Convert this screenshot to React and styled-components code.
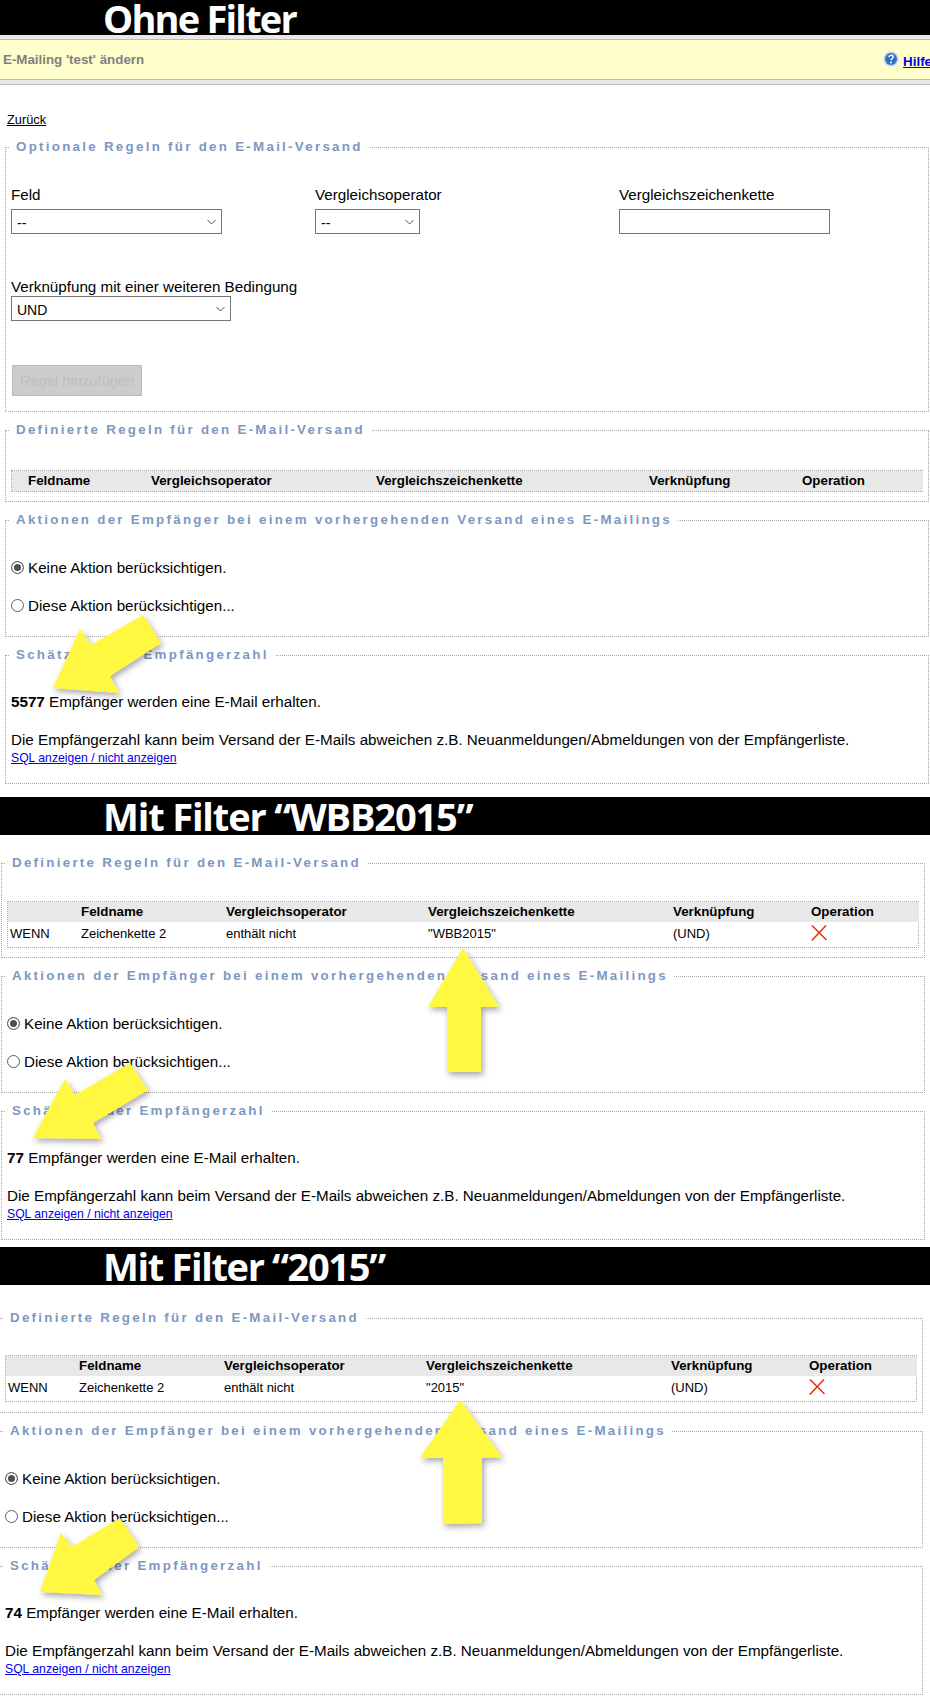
import React from "react";
import styled, { createGlobalStyle } from "styled-components";

const Global = createGlobalStyle`
  html, body { margin: 0; padding: 0; background: #fff; }
  body { font-family: "Liberation Sans", Arial, sans-serif; font-size: 15.2px; color: #000; }
`;

const Page = styled.div`
  position: relative;
  width: 930px;
  height: 1700px;
  overflow: hidden;
  background: #fff;
`;

const Banner = styled.div`
  height: ${(p) => p.$h}px;
  margin-top: ${(p) => p.$top}px;
  background: #000;
  color: #fff;
  padding-left: 103px;
  font-family: "Open Sans", sans-serif;
  font-weight: 700;
  font-size: 38px;
  letter-spacing: ${(p) => p.$ls}px;
  line-height: ${(p) => p.$lh}px;
  overflow: hidden;
  white-space: nowrap;
`;

const TitleBar = styled.div`
  display: flex;
  align-items: center;
  justify-content: space-between;
  height: 39px;
  margin-top: 4px;
  background: #ffffcc;
  border-top: 1px solid #bbb;
  border-bottom: 1px solid #bbb;
  padding-left: 3px;
  box-shadow: 0 -4px 0 #e8e8e8;
`;

const TitleText = styled.span`
  font-size: 13.33px;
  font-weight: 700;
  color: #808080;
`;

const HelpLink = styled.a`
  display: flex;
  align-items: center;
  gap: 4px;
  margin-right: -2px;
  font-size: 13.33px;
  font-weight: 700;
  color: #0000ee;
  > span { text-decoration: underline; padding-top: 3px; }
  > svg { margin-top: -2px; }
`;

const SubStrip = styled.div`
  height: 4px;
  background: #e8e8e8;
  border-bottom: 1px solid #bbb;
`;

const BackLink = styled.a`
  display: block;
  margin: 26px 0 10px 7px;
  font-size: 12.8px;
  line-height: 18px;
  color: #000;
  text-decoration: underline;
`;

const Section = styled.div`
  display: flex;
  flex-direction: column;
  gap: 10px;
  width: ${(p) => p.$w}px;
  margin-left: ${(p) => p.$x}px;
  padding-top: ${(p) => p.$pt}px;
`;

const Box = styled.fieldset`
  margin: 0;
  padding: 0 5px ${(p) => p.$pb}px;
  border: 1px dotted #a8a8a8;
  min-width: 0;
`;

const Legend = styled.legend`
  margin-left: -1px;
  padding: 0 6px;
  font-size: 13.33px;
  line-height: 16px;
  font-weight: 700;
  letter-spacing: 2.28px;
  color: #7d97c3;
  white-space: nowrap;
`;

const FieldGrid = styled.div`
  display: grid;
  grid-template-columns: repeat(3, 304px);
  margin-top: 31px;
`;

const Field = styled.label`
  display: block;
  margin-top: ${(p) => p.$top || 0}px;
`;

const FieldLabel = styled.span`
  display: block;
  line-height: 18px;
  margin-bottom: ${(p) => p.$gap}px;
`;

const SelectWrap = styled.span`
  position: relative;
  display: block;
  width: ${(p) => p.$w}px;
  > svg {
    position: absolute;
    right: 6px;
    top: 10px;
    pointer-events: none;
  }
`;

const Select = styled.select`
  display: block;
  appearance: none;
  box-sizing: border-box;
  width: 100%;
  height: 25px;
  padding: 2px 0 0 5px;
  border: 1px solid #767676;
  border-radius: 0;
  background: #fff;
  color: #000;
  font-family: inherit;
  font-size: 14px;
`;

const TextInput = styled.input`
  display: block;
  box-sizing: border-box;
  width: 211px;
  height: 25px;
  border: 1px solid #767676;
  border-radius: 0;
  background: #fff;
`;

const AddButton = styled.button`
  display: block;
  box-sizing: border-box;
  width: 130px;
  height: 31px;
  margin: 44px 0 0 1px;
  padding: 0;
  border: 1px solid #bbb;
  background: #ccc;
  color: #bfbfbf;
  font-family: inherit;
  font-size: 14.67px;
`;

const TableWrap = styled.div`
  margin-top: ${(p) => p.$top}px;
  border: 1px dotted #a8a8a8;
`;

const RuleTable = styled.table`
  width: 100%;
  table-layout: fixed;
  border-collapse: collapse;
`;

const HeadCell = styled.th`
  box-sizing: border-box;
  height: 20px;
  padding: 0 0 2px 2px;
  background: #e8e8e8;
  font-size: 13.33px;
  font-weight: 700;
  text-align: left;
  white-space: nowrap;
`;

const BodyCell = styled.td`
  box-sizing: border-box;
  height: 25px;
  padding: 0 0 2px 2px;
  font-size: 13px;
  white-space: nowrap;
  > svg { display: block; margin-top: -2px; }
`;

const ActionRow = styled.label`
  display: flex;
  align-items: center;
  gap: 4px;
  height: 18px;
  margin-top: ${(p) => p.$top}px;
`;

const Radio = styled.input.attrs({ type: "radio" })`
  appearance: none;
  box-sizing: border-box;
  flex: none;
  width: 13px;
  height: 13px;
  margin: 0;
  border-radius: 50%;
  border: 1px solid #5f5f5f;
  background: #fff;
  &:checked {
    background: #4f4f4f;
    box-shadow: inset 0 0 0 2px #fff;
  }
`;

const Paragraph = styled.div`
  line-height: 18px;
  margin-top: ${(p) => p.$top}px;
`;

const SqlLink = styled.a`
  display: block;
  margin-top: 2px;
  font-size: 12.2px;
  line-height: 15px;
  color: #0000ee;
  text-decoration: underline;
`;

const ArrowLayer = styled.svg`
  position: absolute;
  left: 0;
  top: 0;
  pointer-events: none;
`;

const HelpIcon = () => (
  <svg width="16" height="16" viewBox="0 0 16 16" aria-hidden="true">
    <circle cx="8" cy="8" r="7.8" fill="#d3d8ec" />
    <circle cx="8" cy="8" r="6" fill="#2f6fc4" />
    <path d="M5.9 6.1c.2-1.3 1.2-1.9 2.3-1.9 1.2 0 2 .7 2 1.7 0 1.5-1.9 1.6-2.1 3.2" fill="none" stroke="#fff" strokeWidth="1.5" />
    <circle cx="8" cy="11.4" r="1" fill="#fff" />
  </svg>
);

const DeleteIcon = () => (
  <svg width="16" height="16" viewBox="0 0 16 16" aria-hidden="true">
    <path d="M1 .5 15.5 15M15 .5 .8 15.5" fill="none" stroke="#e5310b" strokeWidth="1.5" />
  </svg>
);

const Chevron = () => (
  <svg width="9" height="6" viewBox="0 0 9 6" aria-hidden="true">
    <path d="M.5 1 4.5 5 8.5 1" fill="none" stroke="#555" strokeWidth="1" />
  </svg>
);

const Dropdown = ({ w, value }) => (
  <SelectWrap $w={w}>
    <Select><option>{value}</option></Select>
    <Chevron />
  </SelectWrap>
);

const EMPTY_COLS = [14, 123, 225, 273, 153, 123];
const FULL_COLS = [71, 145, 202, 245, 138, 110];

const Rules = ({ top, filter }) => {
  const cols = filter ? FULL_COLS : EMPTY_COLS;
  return (
    <TableWrap $top={top}>
      <RuleTable>
        <colgroup>
          {cols.map((w, i) => (
            <col key={i} style={{ width: w }} />
          ))}
        </colgroup>
        <thead>
          <tr>
            {["", "Feldname", "Vergleichsoperator", "Vergleichszeichenkette", "Verknüpfung", "Operation"].map((t, i) => (
              <HeadCell key={i}>{t}</HeadCell>
            ))}
          </tr>
        </thead>
        {filter && (
          <tbody>
            <tr>
              <BodyCell>WENN</BodyCell>
              <BodyCell>Zeichenkette 2</BodyCell>
              <BodyCell>enthält nicht</BodyCell>
              <BodyCell>"{filter}"</BodyCell>
              <BodyCell>(UND)</BodyCell>
              <BodyCell><DeleteIcon /></BodyCell>
            </tr>
          </tbody>
        )}
      </RuleTable>
    </TableWrap>
  );
};

const Actions = ({ name }) => (
  <Box $pb={22}>
    <Legend>Aktionen der Empfänger bei einem vorhergehenden Versand eines E-Mailings</Legend>
    <ActionRow $top={30}>
      <Radio name={name} defaultChecked />
      Keine Aktion berücksichtigen.
    </ActionRow>
    <ActionRow $top={20}>
      <Radio name={name} />
      Diese Aktion berücksichtigen...
    </ActionRow>
  </Box>
);

const Estimate = ({ count }) => (
  <Box $pb={17}>
    <Legend>Schätzung der Empfängerzahl</Legend>
    <Paragraph $top={30}>
      <b>{count}</b> Empfänger werden eine E-Mail erhalten.
    </Paragraph>
    <Paragraph $top={20}>
      Die Empfängerzahl kann beim Versand der E-Mails abweichen z.B. Neuanmeldungen/Abmeldungen von der Empfängerliste.
    </Paragraph>
    <SqlLink href="#">SQL anzeigen / nicht anzeigen</SqlLink>
  </Box>
);

const DefinedRules = ({ filter, top, pb }) => (
  <Box $pb={pb}>
    <Legend>Definierte Regeln für den E-Mail-Versand</Legend>
    <Rules top={top} filter={filter} />
  </Box>
);

const ARROWS = [
  "53,688 119,693 110,676 161,643 143,615 91,645 80,629",
  "463,948 428,1007 447,1007 447,1072 481,1072 481,1007 499,1007",
  "33,1138 101,1139 93,1123 148,1090 130,1063 75,1095 65,1079",
  "460,1400 420,1458 443,1458 443,1524 482,1523 482,1458 502,1457",
  "40,1592 102,1595 94,1580 139,1547 120,1518 72,1547 61,1533",
];

export default function App() {
  return (
    <Page>
      <Global />
      <Banner $h={35} $top={0} $lh={37} $ls={-1.8}>Ohne Filter</Banner>
      <TitleBar>
        <TitleText>E-Mailing 'test' ändern</TitleText>
        <HelpLink href="#">
          <HelpIcon />
          <span>Hilfe</span>
        </HelpLink>
      </TitleBar>
      <SubStrip />
      <BackLink href="#">Zurück</BackLink>
      <Section $x={5} $w={924} $pt={0}>
        <Box $pb={15}>
          <Legend>Optionale Regeln für den E-Mail-Versand</Legend>
          <FieldGrid>
            <Field>
              <FieldLabel $gap={5}>Feld</FieldLabel>
              <Dropdown w={211} value="--" />
            </Field>
            <Field>
              <FieldLabel $gap={5}>Vergleichsoperator</FieldLabel>
              <Dropdown w={105} value="--" />
            </Field>
            <Field>
              <FieldLabel $gap={5}>Vergleichszeichenkette</FieldLabel>
              <TextInput type="text" />
            </Field>
          </FieldGrid>
          <Field $top={44}>
            <FieldLabel $gap={0}>Verknüpfung mit einer weiteren Bedingung</FieldLabel>
            <Dropdown w={220} value="UND" />
          </Field>
          <AddButton type="button" disabled>Regel hinzufügen</AddButton>
        </Box>
        <DefinedRules top={32} pb={9} />
        <Actions name="a1" />
        <Estimate count="5577" />
      </Section>
      <Banner $h={38} $top={13} $lh={38} $ls={-1.15}>Mit Filter “WBB2015”</Banner>
      <Section $x={1} $w={924} $pt={20}>
        <DefinedRules top={30} pb={9} filter="WBB2015" />
        <Actions name="a2" />
        <Estimate count="77" />
      </Section>
      <Banner $h={38} $top={7} $lh={38} $ls={-1.35}>Mit Filter “2015”</Banner>
      <Section $x={-1} $w={924} $pt={25}>
        <DefinedRules top={29} pb={10} filter="2015" />
        <Actions name="a3" />
        <Estimate count="74" />
      </Section>
      <ArrowLayer width="930" height="1700" viewBox="0 0 930 1700" aria-hidden="true">
        <defs>
          <filter id="arrowShadow" x="-30%" y="-30%" width="160%" height="160%">
            <feDropShadow dx="2" dy="3" stdDeviation="3" floodColor="#000" floodOpacity="0.35" />
          </filter>
        </defs>
        {ARROWS.map((pts) => (
          <polygon key={pts} points={pts} fill="#fff740" filter="url(#arrowShadow)" />
        ))}
      </ArrowLayer>
    </Page>
  );
}
